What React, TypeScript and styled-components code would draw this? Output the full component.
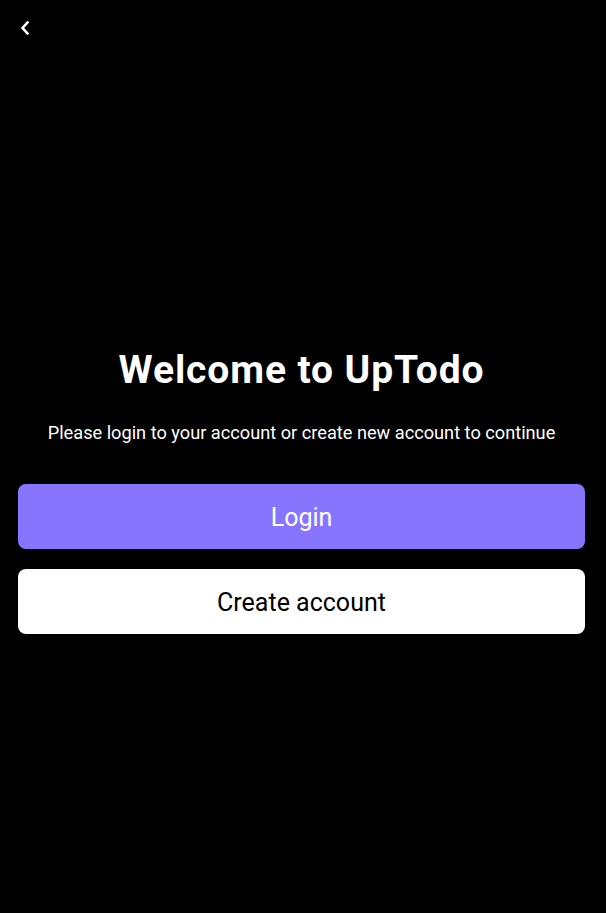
import React from "react";
import styled, { createGlobalStyle } from "styled-components";

const Global = createGlobalStyle`
  html, body { margin: 0; padding: 0; background: #000; }
  body { font-family: Roboto, "Noto Sans", sans-serif; }
  * { box-sizing: border-box; }
`;

const Screen = styled.div`
  width: 606px;
  min-height: 913px;
  background: #000;
  color: #fff;
  display: flex;
  flex-direction: column;
`;

const Header = styled.header`
  height: 54px;
  padding: 18px 0 0 13px;
`;

const BackButton = styled.button`
  width: 24px;
  height: 20px;
  padding: 0;
  border: none;
  background: transparent;
  color: #fff;
  display: flex;
  align-items: center;
  justify-content: center;
  cursor: pointer;
`;

const Content = styled.main`
  display: flex;
  flex-direction: column;
  align-items: center;
  padding: 293px 21px 0 18px;
`;

const Title = styled.h1`
  margin: 0;
  font-size: 39px;
  font-weight: 700;
  line-height: 47px;
  letter-spacing: 0.9px;
  text-align: center;
`;

const Subtitle = styled.p`
  margin: 28px 0 0;
  font-size: 18.2px;
  line-height: 21px;
  text-align: center;
  color: #fff;
`;

const Actions = styled.div`
  width: 100%;
  margin-top: 41px;
  display: flex;
  flex-direction: column;
  gap: 20px;
`;

const ActionButton = styled.button<{ $variant: "primary" | "secondary" }>`
  width: 100%;
  height: 65px;
  border: none;
  border-radius: 8px;
  font-family: Roboto, sans-serif;
  font-size: 25px;
  font-weight: 400;
  line-height: 1;
  padding: 2px 0 0;
  background: ${(p) => (p.$variant === "primary" ? "#8875FF" : "#FFFFFF")};
  color: ${(p) => (p.$variant === "primary" ? "#FFFFFF" : "#000000")};
  cursor: pointer;
`;

export default function App() {
  return (
    <>
      <Global />
      <Screen>
        <Header>
          <BackButton aria-label="Back">
            <svg width="12" height="16" viewBox="0 0 12 16" fill="none">
              <path d="M8.5 2.5 L3.5 8 L8.5 13.5" stroke="#fff" strokeWidth="2.6" strokeLinecap="square" />
            </svg>
          </BackButton>
        </Header>
        <Content>
          <Title>Welcome to UpTodo</Title>
          <Subtitle>Please login to your account or create new account to continue</Subtitle>
          <Actions>
            <ActionButton $variant="primary">Login</ActionButton>
            <ActionButton $variant="secondary">Create account</ActionButton>
          </Actions>
        </Content>
      </Screen>
    </>
  );
}
